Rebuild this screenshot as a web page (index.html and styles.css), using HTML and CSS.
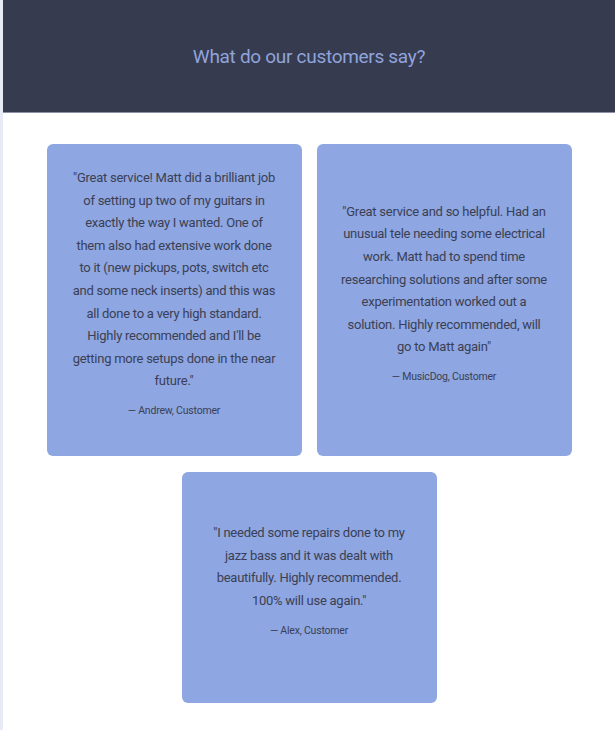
FILE: index.html
```html
<!DOCTYPE html>
<html lang="en">
<head>
<meta charset="utf-8">
<title>Testimonials</title>
<link rel="stylesheet" href="styles.css">
</head>
<body>
<div class="page">
  <header class="hero">
    <h1 class="hero-title">What do our customers say?</h1>
  </header>
  <section class="reviews">
    <article class="card">
      <p class="quote">"Great service! Matt did a brilliant job<br>of setting up two of my guitars in<br>exactly the way I wanted. One of<br>them also had extensive work done<br>to it (new pickups, pots, switch etc<br>and some neck inserts) and this was<br>all done to a very high standard.<br>Highly recommended and I'll be<br>getting more setups done in the near<br>future."</p>
      <p class="author">— Andrew, Customer</p>
    </article>
    <article class="card">
      <p class="quote">"Great service and so helpful. Had an<br>unusual tele needing some electrical<br>work. Matt had to spend time<br>researching solutions and after some<br>experimentation worked out a<br>solution. Highly recommended, will<br>go to Matt again"</p>
      <p class="author">— MusicDog, Customer</p>
    </article>
    <article class="card card-short">
      <p class="quote">"I needed some repairs done to my<br>jazz bass and it was dealt with<br>beautifully. Highly recommended.<br>100% will use again."</p>
      <p class="author">— Alex, Customer</p>
    </article>
  </section>
</div>
</body>
</html>
```
FILE: styles.css
```css
html, body {
  margin: 0;
  padding: 0;
  background: #ffffff;
}
body {
  font-family: Roboto, "Noto Sans", sans-serif;
  color: #3b3f55;
}
.page {
  border-left: 3px solid #e8eaf5;
  min-height: 730px;
  box-sizing: border-box;
}
.hero {
  background: #373b4f;
  height: 112px;
  border-bottom: 1px solid #8c90a8;
  display: flex;
  align-items: center;
  justify-content: center;
}
.hero-title {
  margin: 0;
  font-weight: 400;
  font-size: 19px;
  color: #8fa4dc;
  letter-spacing: -0.3px;
}
.reviews {
  display: flex;
  flex-wrap: wrap;
  justify-content: center;
  gap: 16px 15px;
  padding-top: 31px;
}
.card {
  width: 255px;
  box-sizing: border-box;
  background: #8ea6e1;
  border-radius: 6px;
  padding: 23px 20px 37px;
  display: flex;
  flex-direction: column;
  justify-content: center;
  text-align: center;
}
.card-short {
  min-height: 231px;
}
.quote {
  margin: 0;
  font-size: 13px;
  line-height: 22.6px;
  letter-spacing: -0.25px;
  white-space: nowrap;
}
.author {
  margin: 10px 0 0;
  font-size: 10.5px;
  line-height: 16px;
  letter-spacing: -0.2px;
}
```
